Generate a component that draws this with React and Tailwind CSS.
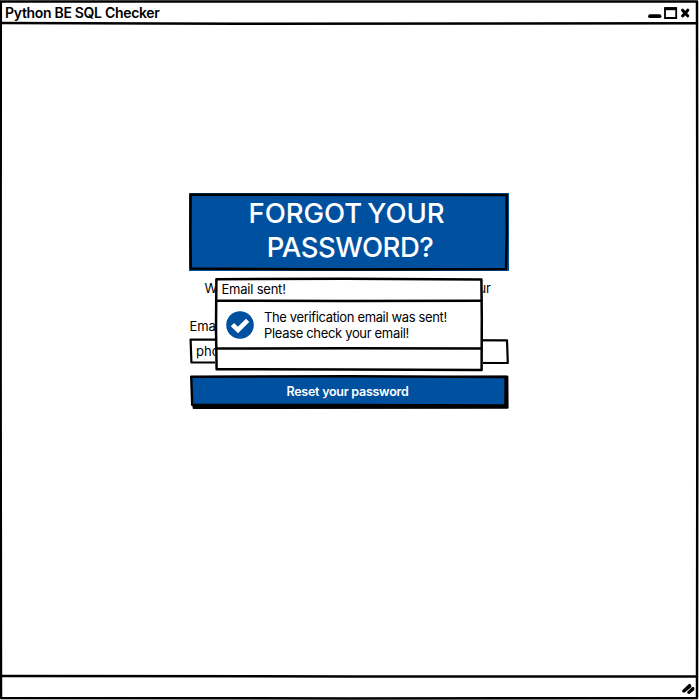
import React from "react";

// Hand-drawn outline that lies over the box it belongs to.
function Sketch({ w, h, paths, width = 2.5 }) {
  return (
    <svg
      className="pointer-events-none absolute inset-0 overflow-visible"
      width={w}
      height={h}
      fill="none"
      stroke="#000"
      strokeWidth={width}
      strokeLinejoin="round"
      strokeLinecap="round"
    >
      {paths.map((d) => (
        <path key={d} d={d} />
      ))}
    </svg>
  );
}

function TitleBar() {
  return (
    <header className="flex h-[24px] shrink-0 items-center justify-between pt-[2px] pr-[8px] pl-[5px]">
      <h1 className="text-[14px] leading-[20px] font-semibold tracking-[-0.31px] whitespace-nowrap">
        Python BE SQL Checker
      </h1>
      <svg width="43" height="14" viewBox="0 0 43 14" fill="none" stroke="#000">
        <path d="M2 10.2H11.5" strokeWidth="3.8" strokeLinecap="round" />
        <path d="M17 2.2H28.2V12H17Z" strokeWidth="1.8" />
        <path d="M16.5 2.7H28.8" strokeWidth="3" />
        <path d="M34.6 4.2L39.8 10M39.8 4.2L34.6 10" strokeWidth="3" strokeLinecap="round" />
      </svg>
    </header>
  );
}

function Dialog() {
  return (
    <section className="absolute top-[85px] left-[26px] flex h-[92px] w-[268px] flex-col bg-white">
      <h3 className="h-[23px] pt-[2px] pl-[6.5px] text-[13px] leading-[19px]">
        <span className="tracking-[-0.22px]">Email sent!</span>
      </h3>
      <div className="flex h-[48px] items-center gap-[10px] pl-[11px]">
        <svg width="28" height="28" viewBox="0 0 28 28">
          <circle cx="14" cy="14" r="13.8" fill="#0050a0" />
          <path
            d="M6.4 13.6L12 19L21.6 9.4"
            fill="none"
            stroke="#fff"
            strokeWidth="4.6"
            strokeLinecap="butt"
            strokeLinejoin="miter"
          />
        </svg>
        <p className="text-[13px] leading-4 whitespace-nowrap">
          <span className="block tracking-[-0.36px]">The verification email was sent!</span>
          <span className="block tracking-[-0.33px]">Please check your email!</span>
        </p>
      </div>
      <Sketch
        w={268}
        h={92}
        paths={[
          "M1.4 1.2L130 0.8L266.4 1.6L266.8 40L266.6 92L130 91.5L1.6 91.2L1 50Z",
          "M1.4 22.8L130 23L266.6 22.8",
          "M1.4 70.6L130 70.3L266.6 70.6",
        ]}
      />
    </section>
  );
}

export default function App() {
  return (
    <div className="relative flex h-[700px] w-[699px] flex-col overflow-hidden bg-white font-['Inter',sans-serif] text-black">
      <TitleBar />
      <main className="flex flex-1 pt-[169px] pl-[189px]">
        <div className="relative flex w-[320px] flex-col self-start">
          <div className="relative h-[78px] w-[320px] bg-[#0050a0] pt-[3px] text-center text-[27.5px] leading-[34px] font-[450] text-white">
            <h2 className="-ml-[5px]">
              <span className="block tracking-[-0.05px] [word-spacing:-2px]">FORGOT YOUR</span>
              <span className="block pl-[7px] tracking-[-0.5px]">PASSWORD?</span>
            </h2>
            <Sketch w={320} h={78} paths={["M1.6 1.8L317.6 2L317.8 40L317 76L160 76.4L1.8 75.6L1.4 40Z"]} />
          </div>
          <p className="mt-[8px] flex justify-between pr-[18px] pl-[15.5px] text-[13px] leading-[18px]">
            <span>W</span>
            <span>ur</span>
          </p>
          <label className="mt-[20px] pl-[0.5px] text-[13px] leading-[18px] tracking-[-0.1px]">Email</label>
          <div className="relative mt-[3px] h-[26px] w-[320px] bg-white pl-[7px] text-[13px] leading-[26px]">
            pho
            <Sketch w={320} h={26} width={2.2} paths={["M1.6 1.6L160 1.8L318 2.4L318.8 25L160 24.6L2.4 24.4Z"]} />
          </div>
          <button className="relative mt-[11px] h-[33px] w-[320px] pr-[3px] text-center text-[12.5px] leading-[32px] font-semibold tracking-[-0.26px] text-white">
            <svg className="absolute inset-0 overflow-visible" width="320" height="33">
              <path d="M3.6 4L318.4 1.5L318.6 32.8L4.6 33Z" fill="#000" stroke="#000" strokeWidth="2" strokeLinejoin="round" />
              <path
                d="M2.2 1.8L160 1.2L316.6 2L316.4 30.4L160 30L3.2 30Z"
                fill="#0050a0"
                stroke="#000"
                strokeWidth="2.4"
                strokeLinejoin="round"
              />
            </svg>
            <span className="relative">Reset your password</span>
          </button>
          <Dialog />
        </div>
      </main>
      <footer className="flex h-[24px] shrink-0 items-center justify-end pt-[1px] pr-[4px]">
        <svg width="14" height="12" viewBox="0 0 14 12" fill="none" stroke="#000" strokeWidth="2.8" strokeLinecap="round">
          <path d="M2.5 8L8.6 2.2M3.5 8L9 3.4M7.6 9.6L12 5.2M8.2 9.4L12 6.4" />
        </svg>
      </footer>
      <Sketch
        w={699}
        h={700}
        paths={[
          "M0.8 1.4L697 1.4L697.4 350L697 698L350 698.5L1 698L0.6 350Z",
          "M1 22.9L240 23.7L697 23.2",
          "M1 676L350 676.5L697 676.5",
        ]}
      />
    </div>
  );
}
